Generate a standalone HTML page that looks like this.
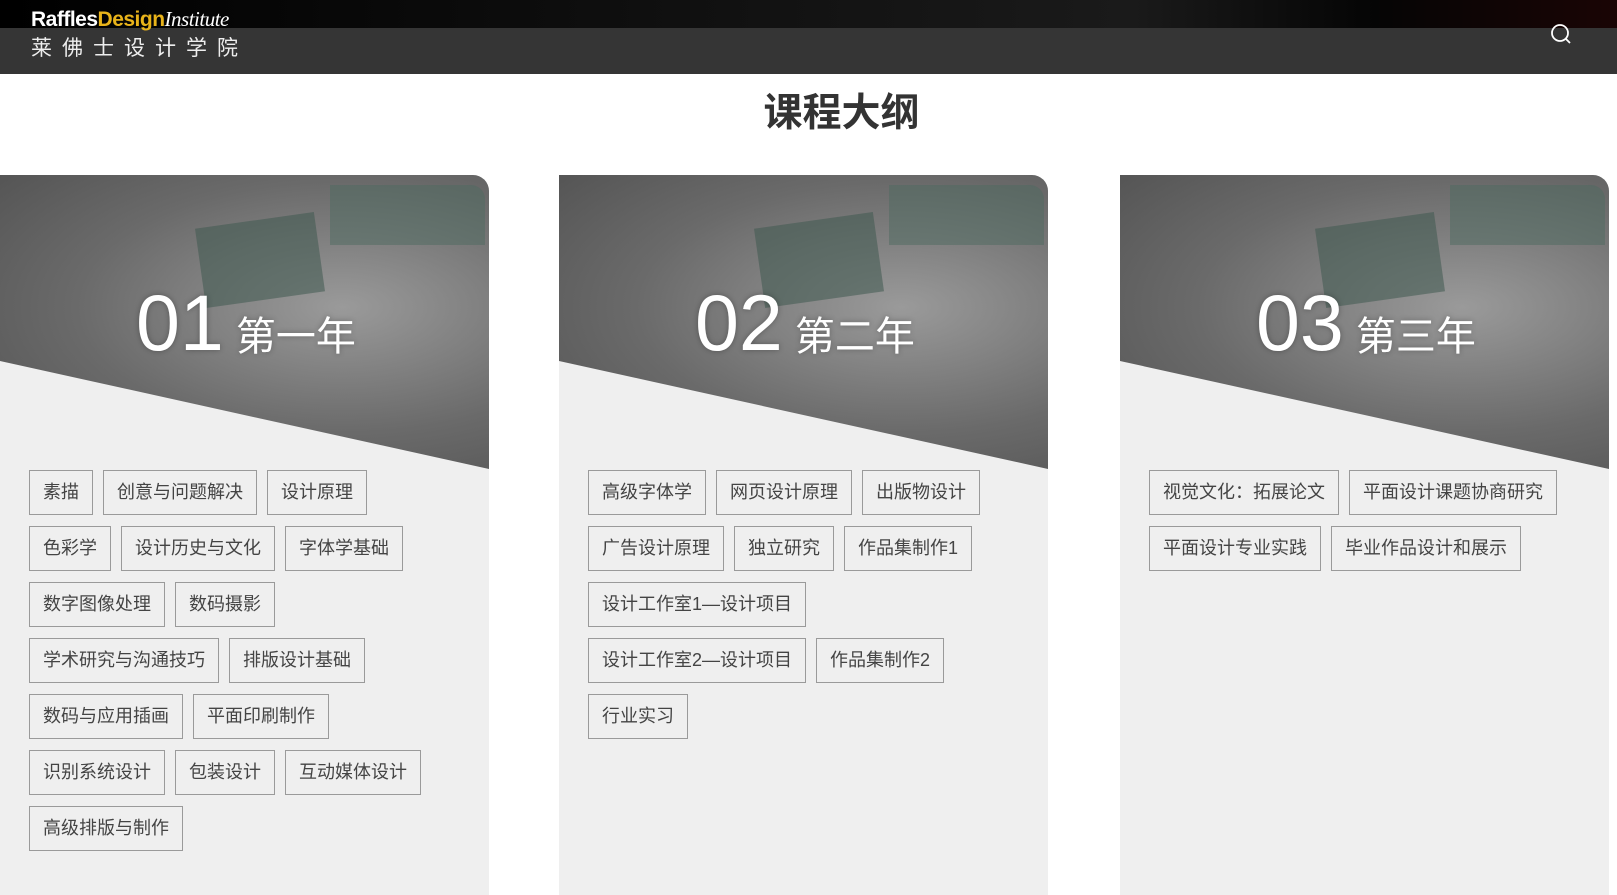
<!DOCTYPE html>
<html><head><meta charset="utf-8"><style>
*{margin:0;padding:0;box-sizing:border-box}
body{width:1617px;height:877px;overflow:hidden;background:#fff;font-family:"Liberation Sans","Noto Sans CJK SC",sans-serif;position:relative}
.top{position:absolute;left:0;top:0;width:1617px;height:28px;background:linear-gradient(90deg,#000 0%,#111 45%,#1a1a1a 70%,#050505 85%,#1a0505 100%)}
.bar{position:absolute;left:0;top:28px;width:1617px;height:46px;background:#353535}
.logo1{position:absolute;left:31px;top:7px;font-size:21px;font-weight:bold;color:#fff;letter-spacing:-0.5px}
.logo1 .y{color:#e8b31a}
.logo1 i{font-family:"Liberation Serif",serif;font-weight:normal}
.logo2{position:absolute;left:31px;top:32px;font-size:21px;color:#eee;letter-spacing:10px}
h1{position:absolute;left:33px;width:1617px;top:82px;text-align:center;font-size:39px;color:#333;font-weight:bold}
.card{position:absolute;top:175px;width:489px;height:720px;background:#efefef;border-top-right-radius:16px;overflow:hidden}
.img{position:absolute;left:0;top:0;width:489px;height:294px;background:radial-gradient(ellipse at 70% 45%,#9a9a9a,#6a6a6a 55%,#505050);clip-path:polygon(0 0,100% 0,100% 294px,0 186px)}
.img:before{content:"";position:absolute;left:200px;top:45px;width:120px;height:80px;background:#3f5a50;opacity:.55;transform:rotate(-8deg)}
.img:after{content:"";position:absolute;left:330px;top:10px;width:155px;height:60px;background:#4e6a60;opacity:.5;border-radius:0 14px 0 0}
.ttl{position:absolute;left:136px;top:102px;color:#fff;white-space:nowrap;text-shadow:0 0 6px rgba(0,0,0,.3)}
.ttl b{font-size:79px;font-weight:normal}
.ttl span{font-size:40px;margin-left:12px}
.tags{position:absolute;left:29px;top:295px;width:415px;display:flex;flex-wrap:wrap;gap:11px 10px}
.tags div{height:45px;line-height:43px;border:1px solid #9a9a9a;padding:0 13px;font-size:18px;color:#444;white-space:nowrap}
</style></head><body>
<div class="top"></div><div class="bar"></div>
<div class="logo1">Raffles<span class="y">Design</span><i>Institute</i></div>
<div class="logo2">莱佛士设计学院</div>
<svg style="position:absolute;left:1550px;top:23px" width="22" height="22" viewBox="0 0 22 22"><circle cx="10" cy="10" r="8" fill="none" stroke="#fff" stroke-width="1.8"/><line x1="16" y1="16" x2="20" y2="20" stroke="#fff" stroke-width="1.8"/></svg>
<h1>课程大纲</h1>

<div class="card" style="left:0"><div class="img"></div><div class="ttl"><b>01</b><span>第一年</span></div>
<div class="tags"><div>素描</div><div>创意与问题解决</div><div>设计原理</div><div>色彩学</div><div>设计历史与文化</div><div>字体学基础</div><div>数字图像处理</div><div>数码摄影</div><div>学术研究与沟通技巧</div><div>排版设计基础</div><div>数码与应用插画</div><div>平面印刷制作</div><div>识别系统设计</div><div>包装设计</div><div>互动媒体设计</div><div>高级排版与制作</div></div></div>

<div class="card" style="left:559px"><div class="img"></div><div class="ttl"><b>02</b><span>第二年</span></div>
<div class="tags"><div>高级字体学</div><div>网页设计原理</div><div>出版物设计</div><div>广告设计原理</div><div>独立研究</div><div>作品集制作1</div><div>设计工作室1—设计项目</div><div>设计工作室2—设计项目</div><div>作品集制作2</div><div>行业实习</div></div></div>

<div class="card" style="left:1120px"><div class="img"></div><div class="ttl"><b>03</b><span>第三年</span></div>
<div class="tags"><div>视觉文化：拓展论文</div><div>平面设计课题协商研究</div><div>平面设计专业实践</div><div>毕业作品设计和展示</div></div></div>
</body></html>
